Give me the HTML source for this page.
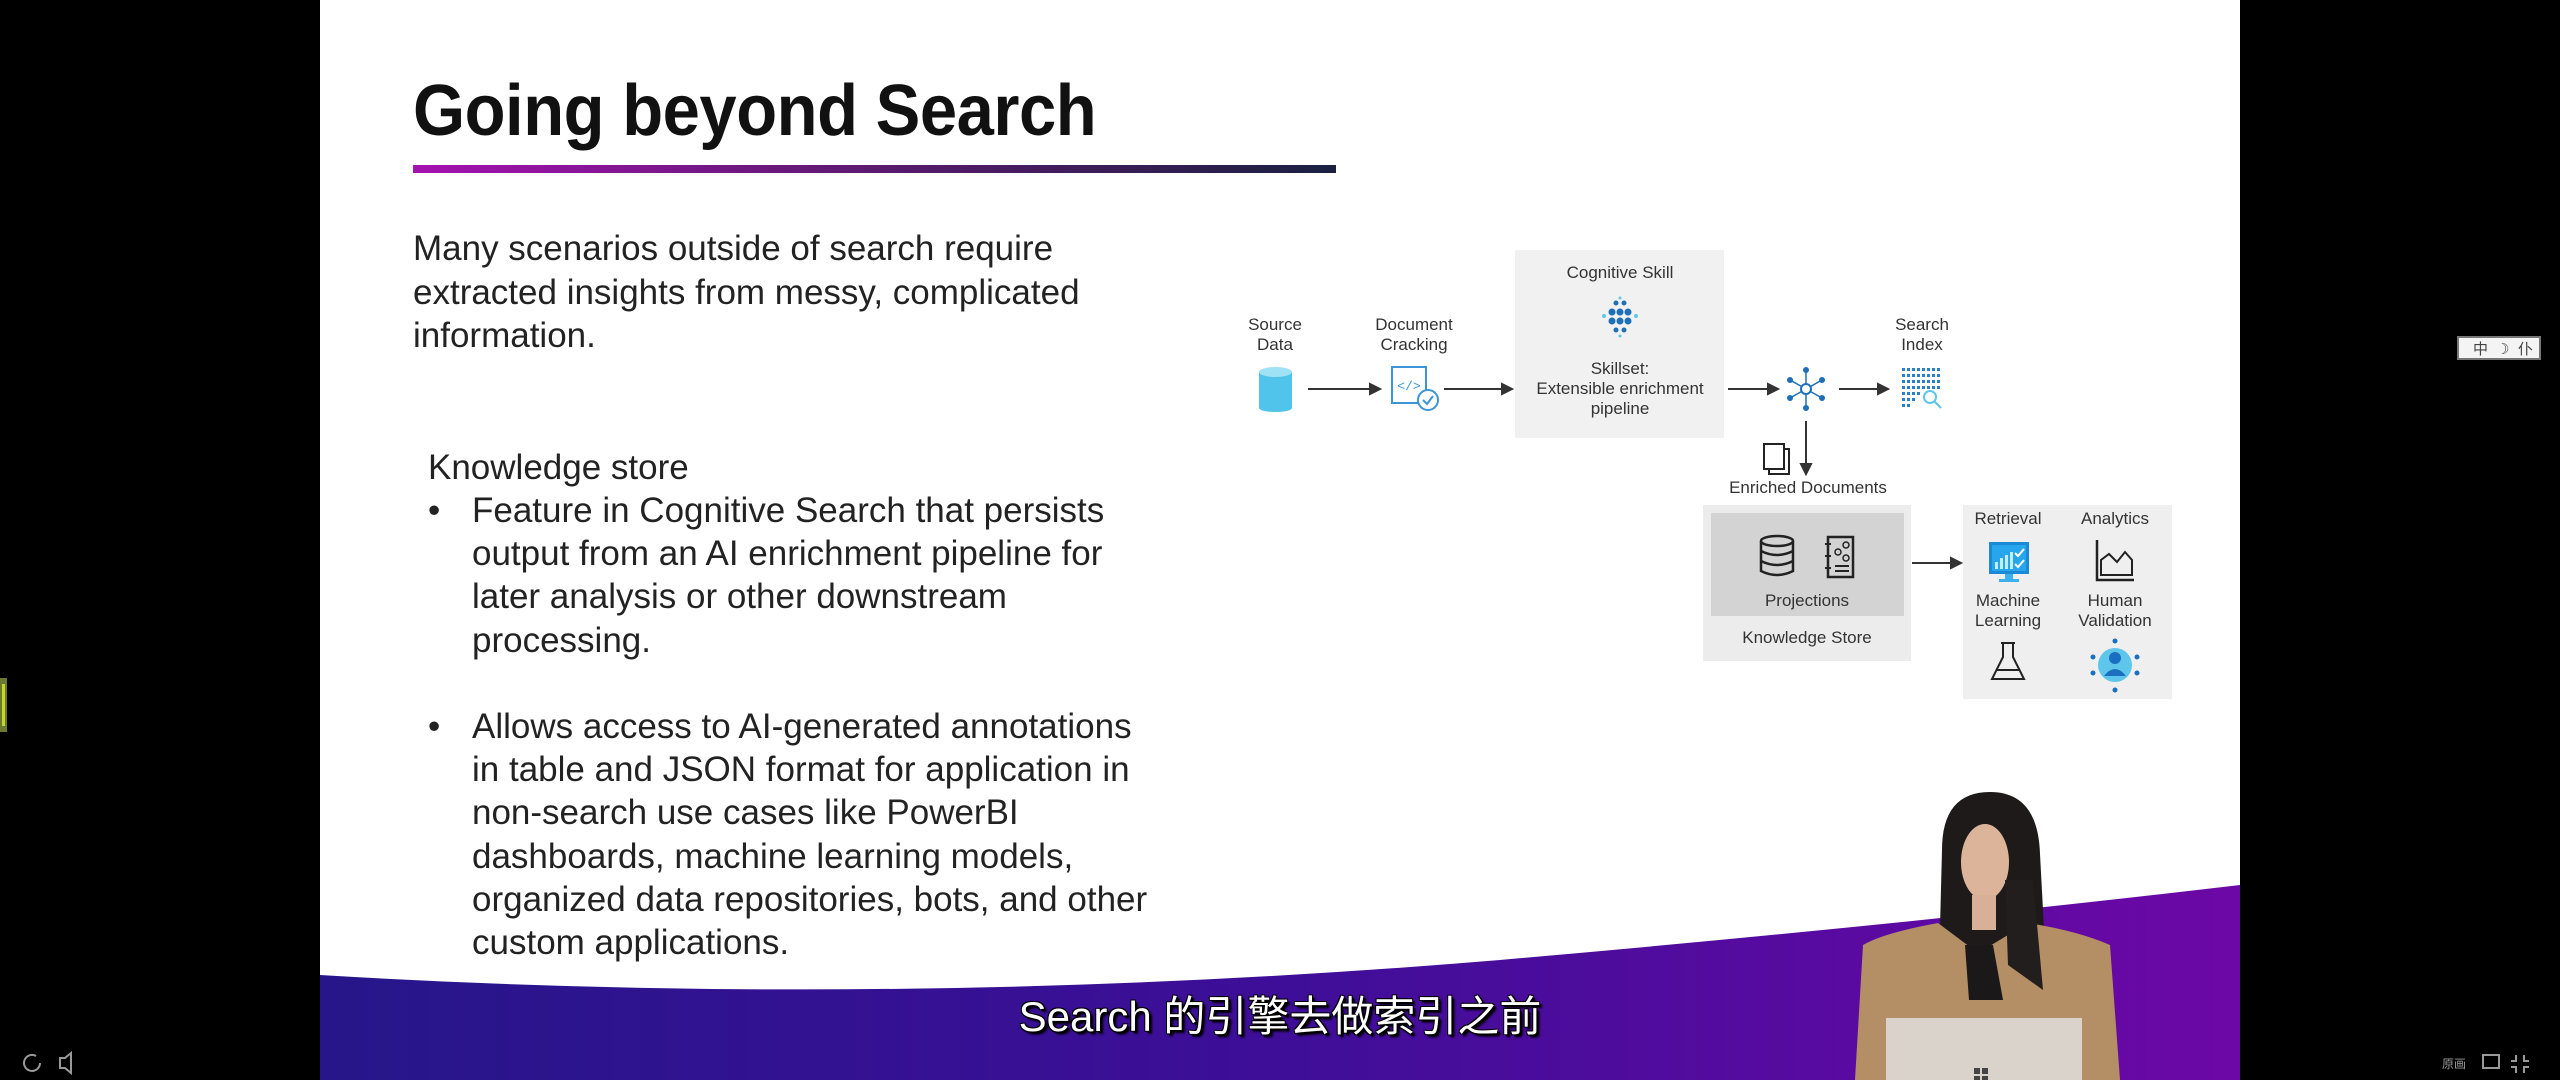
<!DOCTYPE html>
<html><head><meta charset="utf-8"><style>
*{margin:0;padding:0;box-sizing:border-box}
html,body{width:2560px;height:1080px;overflow:hidden;background:#000}
body{position:relative;font-family:"Liberation Sans","Noto Sans CJK SC",sans-serif}
.slide{position:absolute;left:320px;top:0;width:1920px;height:1080px;background:#fff;overflow:hidden}
.abs{position:absolute}
.t{position:absolute;white-space:nowrap;color:#222;font-size:35px;line-height:43.5px;letter-spacing:0}
.d{position:absolute;white-space:nowrap;color:#333;font-size:17px;line-height:20px;text-align:center;transform:translateX(-50%)}
</style></head><body>
<div class="slide"></div>
<svg class="abs" style="left:0;top:0" width="2560" height="1080">
<defs>
<linearGradient id="ul" x1="0" x2="1"><stop offset="0" stop-color="#a412b0"/><stop offset="0.5" stop-color="#5a1a6e"/><stop offset="1" stop-color="#1a2040"/></linearGradient>
<linearGradient id="band" x1="0" x2="1"><stop offset="0" stop-color="#26168a"/><stop offset="0.5" stop-color="#3e0e98"/><stop offset="1" stop-color="#6c08a6"/></linearGradient>
</defs>
<rect x="413" y="165" width="923" height="8" fill="url(#ul)"/>
<path d="M320 975 Q900 1010 1500 960 Q1900 925 2240 885 L2240 1080 L320 1080 Z" fill="url(#band)"/>
<g stroke="#333" stroke-width="2" fill="#333">
<line x1="1308" y1="389" x2="1372" y2="389"/><path d="M1380 389 l-10 -5 v10z"/>
<line x1="1444" y1="389" x2="1504" y2="389"/><path d="M1512 389 l-10 -5 v10z"/>
<line x1="1728" y1="389" x2="1770" y2="389"/><path d="M1778 389 l-10 -5 v10z"/>
<line x1="1839" y1="389" x2="1880" y2="389"/><path d="M1888 389 l-10 -5 v10z"/>
<line x1="1806" y1="421" x2="1806" y2="466"/><path d="M1806 474 l-5 -10 h10z"/>
<line x1="1912" y1="563" x2="1953" y2="563"/><path d="M1961 563 l-10 -5 v10z"/>
</g>
<rect x="1515" y="250" width="209" height="188" fill="#f1f1f1"/>
<rect x="1703" y="505" width="208" height="156" fill="#ececec"/>
<rect x="1711" y="513" width="193" height="103" fill="#d3d3d3"/>
<rect x="1963" y="505" width="209" height="194" fill="#efefef"/>
<rect x="1259" y="372" width="33" height="36" fill="#50c4ea"/><ellipse cx="1275.5" cy="408" rx="16.5" ry="4" fill="#50c4ea"/><ellipse cx="1275.5" cy="372" rx="16.5" ry="5" fill="#9fe2f6"/>
<rect x="1392" y="367" width="34" height="36" fill="#fff" stroke="#3a96d6" stroke-width="2"/>
<text x="1409" y="390" font-size="13" fill="#3a96d6" text-anchor="middle" font-family="Liberation Mono">&lt;/&gt;</text>
<circle cx="1428" cy="400" r="10" fill="#fff" stroke="#3a96d6" stroke-width="2"/><path d="M1423 400 l4 4 l6 -8" stroke="#3a96d6" stroke-width="2" fill="none"/>
<g fill="#1d6fb8"><circle cx="1612" cy="312" r="3.5"/><circle cx="1620" cy="312" r="3.5"/><circle cx="1628" cy="312" r="3.5"/><circle cx="1612" cy="321" r="3.5"/><circle cx="1620" cy="321" r="3.5"/><circle cx="1628" cy="321" r="3.5"/><circle cx="1616" cy="303" r="2.5"/><circle cx="1624" cy="303" r="2.5"/><circle cx="1616" cy="330" r="2.5"/><circle cx="1624" cy="330" r="2.5"/></g>
<g fill="#5ec6ea"><circle cx="1604" cy="316" r="2"/><circle cx="1636" cy="316" r="2"/><circle cx="1620" cy="298" r="1.5"/><circle cx="1620" cy="336" r="1.5"/></g>
<g stroke="#1d6fb8" stroke-width="1.5"><line x1="1806" y1="389" x2="1806" y2="370"/><line x1="1806" y1="389" x2="1806" y2="408"/><line x1="1806" y1="389" x2="1790" y2="380"/><line x1="1806" y1="389" x2="1822" y2="380"/><line x1="1806" y1="389" x2="1790" y2="398"/><line x1="1806" y1="389" x2="1822" y2="398"/></g>
<circle cx="1806" cy="389" r="5" fill="#fff" stroke="#1d6fb8" stroke-width="2"/>
<g fill="#1d6fb8"><circle cx="1806" cy="370" r="3"/><circle cx="1806" cy="408" r="3"/><circle cx="1790" cy="380" r="3"/><circle cx="1822" cy="380" r="3"/><circle cx="1790" cy="398" r="3"/><circle cx="1822" cy="398" r="3"/></g>
<g fill="#2a7fc8">
<g id="row"><rect x="1902" y="368" width="3" height="3"/><rect x="1907" y="368" width="3" height="3"/><rect x="1912" y="368" width="3" height="3"/><rect x="1917" y="368" width="3" height="3"/><rect x="1922" y="368" width="3" height="3"/><rect x="1927" y="368" width="3" height="3"/><rect x="1932" y="368" width="3" height="3"/><rect x="1937" y="368" width="3" height="3"/></g>
<use href="#row" y="6"/><use href="#row" y="12"/><use href="#row" y="18"/>
<rect x="1902" y="392" width="3" height="3"/><rect x="1907" y="392" width="3" height="3"/><rect x="1912" y="392" width="3" height="3"/><rect x="1917" y="392" width="3" height="3"/>
<rect x="1902" y="398" width="3" height="3"/><rect x="1907" y="398" width="3" height="3"/><rect x="1912" y="398" width="3" height="3"/>
<rect x="1902" y="404" width="3" height="3"/><rect x="1907" y="404" width="3" height="3"/>
</g>
<circle cx="1930" cy="397" r="6" fill="none" stroke="#5ec6ea" stroke-width="2"/><line x1="1934" y1="401" x2="1941" y2="408" stroke="#5ec6ea" stroke-width="2"/>
<rect x="1769" y="449" width="20" height="25" fill="#fff" stroke="#222" stroke-width="2"/><rect x="1764" y="444" width="20" height="25" fill="#fff" stroke="#222" stroke-width="2"/>
<g fill="none" stroke="#222" stroke-width="2.5"><ellipse cx="1777" cy="541" rx="16" ry="5"/><path d="M1761 541 v30 q16 8 32 0 v-30 M1761 551 q16 8 32 0 M1761 561 q16 8 32 0"/></g>
<rect x="1828" y="537" width="25" height="40" fill="none" stroke="#222" stroke-width="2.5"/><g stroke="#222" stroke-width="2"><line x1="1825" y1="544" x2="1831" y2="544"/><line x1="1825" y1="556" x2="1831" y2="556"/><line x1="1825" y1="568" x2="1831" y2="568"/><line x1="1835" y1="566" x2="1849" y2="566"/><line x1="1835" y1="571" x2="1849" y2="571"/></g>
<g fill="none" stroke="#222" stroke-width="1.5"><circle cx="1846" cy="545" r="3"/><circle cx="1838" cy="552" r="3"/><circle cx="1846" cy="558" r="3"/></g>
<rect x="1989" y="542" width="40" height="32" fill="#1a8ad6"/><rect x="1992" y="545" width="34" height="26" fill="#27a6ee"/>
<g fill="#bfefff"><rect x="1995" y="562" width="3" height="7"/><rect x="2000" y="558" width="3" height="11"/><rect x="2005" y="555" width="3" height="14"/><rect x="2010" y="552" width="3" height="17"/></g>
<path d="M2015 553 l3 3 l6 -7 M2015 564 l3 3 l6 -7" stroke="#fff" stroke-width="2" fill="none"/>
<rect x="2005" y="574" width="8" height="5" fill="#3ab0ee"/><rect x="1999" y="579" width="20" height="3" fill="#3ab0ee"/>
<path d="M2097 540 v40 h37" fill="none" stroke="#222" stroke-width="2.5"/><path d="M2101 575 v-15 l8 -6 l8 8 l8 -10 l7 8 v15 z" fill="none" stroke="#222" stroke-width="2"/>
<path d="M2001 643 h14 M2003 643 v14 l-11 22 h32 l-11 -22 v-14 M1997 670 h22" fill="none" stroke="#222" stroke-width="2"/>
<circle cx="2115" cy="665" r="17" fill="#5ec6ea"/><circle cx="2115" cy="658" r="6" fill="#1a6fc0"/><path d="M2104 676 q11 -14 22 0 z" fill="#1a6fc0"/>
<g fill="#1a6fc0"><circle cx="2115" cy="641" r="2.5"/><circle cx="2115" cy="690" r="2.5"/><circle cx="2093" cy="657" r="2.5"/><circle cx="2137" cy="657" r="2.5"/><circle cx="2093" cy="673" r="2.5"/><circle cx="2137" cy="673" r="2.5"/></g>
<!-- presenter -->
<path d="M1942 850 q0 -58 48 -58 q48 0 50 62 l8 150 h-110 z" fill="#1e1a1a"/>
<ellipse cx="1985" cy="862" rx="24" ry="38" fill="#dcb49a"/>
<path d="M1972 895 h24 v35 h-24z" fill="#d8b098"/>
<path d="M1855 1080 l8 -135 q20 -12 75 -22 l40 30 l50 -30 q50 8 82 22 l10 135 z" fill="#b48e64"/>
<path d="M1965 945 l28 0 l10 55 l-34 0 z" fill="#1a1818"/>
<path d="M2005 880 l28 0 l10 110 l-35 -25 z" fill="#231e1e"/>
<rect x="1886" y="1018" width="196" height="62" fill="#d9d3cb"/>
<g fill="#444"><rect x="1974" y="1068" width="6" height="6"/><rect x="1982" y="1068" width="6" height="6"/><rect x="1974" y="1076" width="6" height="4"/><rect x="1982" y="1076" width="6" height="4"/></g>
<rect x="0" y="678" width="7" height="54" fill="#6a7a30"/><rect x="2" y="684" width="3" height="42" fill="#c8d820"/>
<rect x="2458" y="337" width="82" height="22" fill="#f4f4f4" stroke="#777" stroke-width="2"/>
<text x="2473" y="354" font-size="15" fill="#444" font-family="Noto Sans CJK SC">中</text><text x="2496" y="354" font-size="15" fill="#444">☽</text><text x="2518" y="354" font-size="15" fill="#444" font-family="Noto Sans CJK SC">仆</text>
<g fill="none" stroke="#999" stroke-width="2"><path d="M36 1056 a8 8 0 1 0 4 7"/><path d="M60 1058 h5 l6 -5 v20 l-6 -5 h-5z"/><rect x="2483" y="1055" width="16" height="13"/><path d="M2516 1055 v6 h-5 M2524 1055 v6 h5 M2516 1073 v-6 h-5 M2524 1073 v-6 h5"/></g>
<text x="2442" y="1068" font-size="12" fill="#999" font-family="Noto Sans CJK SC">原画</text>
</svg>

<div class="abs" style="left:413px;top:70px;font-size:72px;font-weight:bold;color:#111;white-space:nowrap;transform:scaleX(0.93);transform-origin:left;letter-spacing:-0.5px">Going beyond Search</div>

<div class="t" style="left:413px;top:227px">Many scenarios outside of search require</div>
<div class="t" style="left:413px;top:271px">extracted insights from messy, complicated</div>
<div class="t" style="left:413px;top:314px">information.</div>

<div class="t" style="left:428px;top:446px">Knowledge store</div>
<div class="t" style="left:428px;top:489px">•</div>
<div class="t" style="left:472px;top:489px">Feature in Cognitive Search that persists</div>
<div class="t" style="left:472px;top:532px">output from an AI enrichment pipeline for</div>
<div class="t" style="left:472px;top:575px">later analysis or other downstream</div>
<div class="t" style="left:472px;top:619px">processing.</div>
<div class="t" style="left:428px;top:705px">•</div>
<div class="t" style="left:472px;top:705px">Allows access to AI-generated annotations</div>
<div class="t" style="left:472px;top:748px">in table and JSON format for application in</div>
<div class="t" style="left:472px;top:791px">non-search use cases like PowerBI</div>
<div class="t" style="left:472px;top:835px">dashboards, machine learning models,</div>
<div class="t" style="left:472px;top:878px">organized data repositories, bots, and other</div>
<div class="t" style="left:472px;top:921px">custom applications.</div>

<div class="d" style="left:1275px;top:315px">Source<br>Data</div>
<div class="d" style="left:1414px;top:315px">Document<br>Cracking</div>
<div class="d" style="left:1620px;top:263px">Cognitive Skill</div>
<div class="d" style="left:1620px;top:359px">Skillset:<br>Extensible enrichment<br>pipeline</div>
<div class="d" style="left:1922px;top:315px">Search<br>Index</div>
<div class="d" style="left:1808px;top:478px">Enriched Documents</div>
<div class="d" style="left:1807px;top:591px">Projections</div>
<div class="d" style="left:1807px;top:628px">Knowledge Store</div>
<div class="d" style="left:2008px;top:509px">Retrieval</div>
<div class="d" style="left:2115px;top:509px">Analytics</div>
<div class="d" style="left:2008px;top:591px">Machine<br>Learning</div>
<div class="d" style="left:2115px;top:591px">Human<br>Validation</div>

<div class="abs" style="left:1280px;top:983px;transform:translateX(-50%);white-space:nowrap;font-size:42px;color:#fff;font-family:'Liberation Sans','Noto Sans CJK SC',sans-serif;text-shadow:2px 2px 0 #000,-1px -1px 0 #000,1px -1px 0 #000,-1px 1px 0 #000,3px 3px 2px #000">Search 的引擎去做索引之前</div>
</body></html>
